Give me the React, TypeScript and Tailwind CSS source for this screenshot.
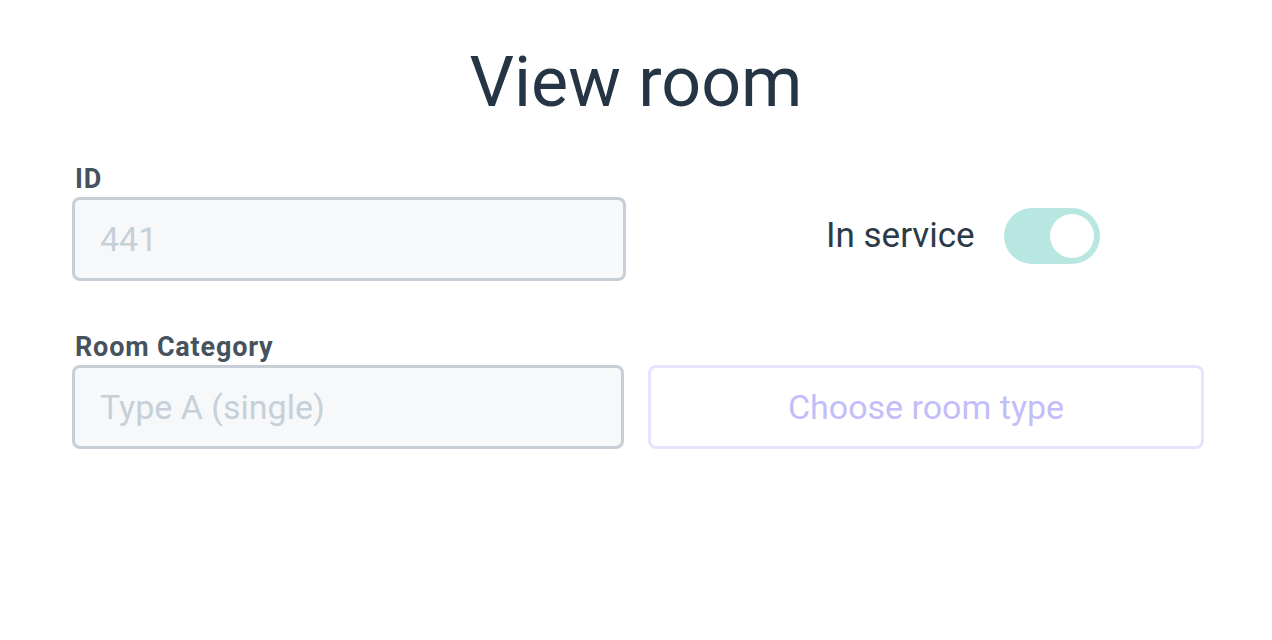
export default function App() {
  return (
    <div
      className="w-[1272px] h-[640px] bg-white text-[#263545]"
      style={{ fontFamily: "Roboto, 'Liberation Sans', sans-serif" }}
    >
      <h1 className="pt-[39px] text-center text-[70px] leading-[86px] font-normal">
        View room
      </h1>

      <div className="ml-[72px] w-[1132px] mt-[39px] flex flex-col gap-[51px]">
        <div className="flex items-end gap-[22px]">
          <div className="w-[554px]">
            <label className="block text-[27px] leading-[30px] font-bold tracking-[0.8px] text-[#46535f] pl-[3px]">
              ID
            </label>
            <div className="mt-[3px] h-[84px] rounded-[8px] border-[3px] border-[#c6ced7] bg-[#f7f8fa] px-[25px] flex items-center text-[34px] text-[#c6d0d9]">
              441
            </div>
          </div>
          <div className="flex-1 h-[84px] pb-[6px] flex items-center pl-[178px] gap-[29px]">
            <span className="text-[35px] text-[#2a3a48]">In service</span>
            <div className="w-[96px] h-[56px] rounded-full bg-[#b8e6e0] flex items-center justify-end pr-[6px]">
              <div className="w-[44px] h-[44px] rounded-full bg-white" />
            </div>
          </div>
        </div>

        <div className="flex items-end gap-[24px]">
          <div className="w-[552px]">
            <label className="block text-[27px] leading-[30px] font-bold tracking-[0.8px] text-[#46535f] pl-[3px]">
              Room Category
            </label>
            <div className="mt-[3px] h-[84px] rounded-[8px] border-[3px] border-[#c6ced7] bg-[#f7f8fa] px-[25px] flex items-center text-[34px] text-[#c6d0d9]">
              Type A (single)
            </div>
          </div>
          <button className="flex-1 h-[84px] rounded-[8px] border-[3px] border-[#e6e4fd] bg-white text-[34px] text-[#c3bdf9]">
            Choose room type
          </button>
        </div>
      </div>
    </div>
  );
}
